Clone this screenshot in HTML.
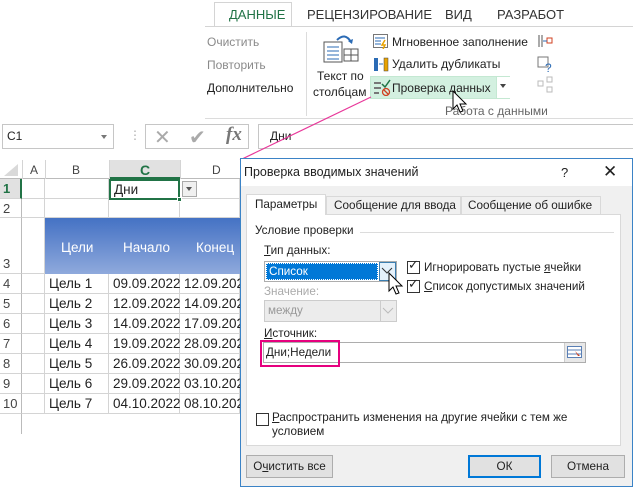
<!DOCTYPE html>
<html><head><meta charset="utf-8"><style>
*{margin:0;padding:0;box-sizing:border-box}
body{width:633px;height:487px;overflow:hidden;background:#fff;position:relative;font-family:"Liberation Sans","DejaVu Sans",sans-serif;font-size:12px;color:#222}
.a{position:absolute;white-space:nowrap}
.g{color:#8a8a8a}
.d{font-size:11.7px}
.cell{position:absolute;border-right:1px solid #d4d4d4;border-bottom:1px solid #d4d4d4;font-size:13.5px;padding-left:4px;line-height:19px}
.rh{position:absolute;left:0;width:22px;border-bottom:1px solid #d4d4d4;border-right:1px solid #bbb;background:#fff;font-size:13px;color:#444;padding-left:3px;line-height:19px}
.u{text-decoration:underline}
.btn{position:absolute;height:23px;border:1px solid #adadad;background:#e1e1e1;text-align:center;line-height:21px;font-size:11.7px}
.cb{position:absolute;width:13px;height:13px;border:1px solid #333;background:#fff}
</style></head><body>
<!-- ribbon tabs -->
<div class="a" style="left:214px;top:2px;width:78px;height:25px;border:1px solid #d4d4d4;border-bottom:none;background:#fff"></div>
<div class="a" style="left:205px;top:26px;width:428px;border-top:1px solid #d4d4d4"></div>
<div class="a" style="left:214px;top:27px;width:78px;height:2px;background:#fff"></div>
<div class="a" style="left:229px;top:7px;color:#217346;font-size:13px">ДАННЫЕ</div>
<div class="a" style="left:307px;top:7px;font-size:13px;color:#333">РЕЦЕНЗИРОВАНИЕ</div>
<div class="a" style="left:445px;top:7px;font-size:13px;color:#333">ВИД</div>
<div class="a" style="left:497px;top:7px;font-size:13px;color:#333">РАЗРАБОТ</div>
<div class="a g" style="left:207px;top:35px">Очистить</div>
<div class="a g" style="left:207px;top:58px">Повторить</div>
<div class="a" style="left:207px;top:81px">Дополнительно</div>
<div class="a" style="left:306px;top:32px;height:84px;border-left:1px solid #dcdcdc"></div>
<svg class="a" style="left:323px;top:32px" width="36" height="32"><rect x="1" y="10" width="18" height="20" fill="#fff" stroke="#555"/><path d="M4 15h12M4 19h12M4 23h12M4 27h12" stroke="#2b6bb5"/><rect x="21" y="17" width="14" height="12" fill="#fff" stroke="#555"/><path d="M21 23h14M28 17v12" stroke="#555"/><path d="M14 8q8-8 14 2" fill="none" stroke="#2b6bb5" stroke-width="2"/><path d="M25 9l4 3 1-5z" fill="#2b6bb5"/></svg>
<div class="a" style="left:317px;top:69px">Текст по</div>
<div class="a" style="left:313px;top:85px">столбцам</div>
<svg class="a" style="left:373px;top:34px" width="16" height="15"><rect x=".5" y=".5" width="14" height="13" fill="#fff" stroke="#777"/><path d="M2 4h10M2 7h6M2 10h6" stroke="#2b6bb5"/><path d="M12 6l-3 5h3l-2 4" stroke="#e8a200" fill="none" stroke-width="1.5"/></svg>
<div class="a" style="left:392px;top:35px">Мгновенное заполнение</div>
<svg class="a" style="left:373px;top:57px" width="16" height="15"><rect x="1" y="1" width="4" height="13" fill="#2b6bb5"/><rect x="11" y="1" width="4" height="13" fill="#e8a200" stroke="#444" stroke-width=".5"/><path d="M6 7h4" stroke="#2b6bb5"/></svg>
<div class="a" style="left:392px;top:57px">Удалить дубликаты</div>
<div class="a" style="left:370px;top:76px;width:140px;height:23px;background:#d3f0e0;border:1px solid #c4e8d2"></div>
<div class="a" style="left:496px;top:77px;width:14px;height:21px;background:#fff;border-left:1px solid #c4e8d2"></div>
<div class="a" style="left:500px;top:84px;border:3px solid transparent;border-top:4px solid #444"></div>
<svg class="a" style="left:373px;top:79px" width="18" height="17"><path d="M1 4h7M1 9h7M1 14h5" stroke="#777" stroke-width="2"/><path d="M9 5l3 3 5-7" stroke="#217346" fill="none" stroke-width="1.5"/><circle cx="13" cy="13" r="3.5" fill="none" stroke="#d04020" stroke-width="1.3"/><path d="M10.5 10.5l5 5" stroke="#d04020" stroke-width="1.3"/></svg>
<div class="a" style="left:392px;top:81px">Проверка данных</div>
<svg class="a" style="left:537px;top:33px" width="16" height="65"><path d="M2 2v12M5 2v12" stroke="#555"/><rect x="10" y="5" width="5" height="5" fill="none" stroke="#d04020"/><path d="M6 8h4" stroke="#2b6bb5"/><rect x="1" y="24" width="10" height="10" fill="none" stroke="#777"/><text x="8" y="39" font-size="12" fill="#2b6bb5" font-family="Liberation Sans">?</text><rect x="1" y="48" width="5" height="5" fill="none" stroke="#bbb"/><rect x="10" y="44" width="5" height="5" fill="none" stroke="#bbb"/><rect x="10" y="54" width="5" height="5" fill="none" stroke="#bbb"/></svg>
<div class="a g" style="left:445px;top:104px;color:#666">Работа с данными</div>
<div class="a" style="left:205px;top:118px;width:428px;border-top:1px solid #dcdcdc"></div>
<!-- formula bar -->
<div class="a" style="left:2px;top:124px;width:112px;height:25px;border:1px solid #c6c6c6"></div>
<div class="a" style="left:7px;top:129px">C1</div>
<div class="a" style="left:101px;top:135px;border:3px solid transparent;border-top:4px solid #777"></div>
<div class="a" style="left:129px;top:128px;color:#aaa">⋮</div>
<div class="a" style="left:145px;top:124px;width:104px;height:25px;border:1px solid #c6c6c6"></div>
<div class="a" style="left:154px;top:125px;font-size:20px;color:#aaa">✕</div>
<div class="a" style="left:189px;top:125px;font-size:20px;color:#aaa">✔</div>
<div class="a" style="left:226px;top:124px;font-family:'Liberation Serif',serif;font-style:italic;font-weight:bold;font-size:19px;color:#777">fx</div>
<div class="a" style="left:258px;top:124px;width:380px;height:25px;border:1px solid #c6c6c6"></div>
<div class="a" style="left:270px;top:129px">Дни</div>
<!-- grid headers -->
<div class="a" style="left:0;top:160px;width:240px;height:19px;background:#fff;border-bottom:1px solid #bbb"></div>
<div class="a" style="left:4px;top:164px;border-left:14px solid transparent;border-bottom:12px solid #d9d9d9"></div>
<div class="a" style="left:109px;top:160px;width:71px;height:19px;background:#e1e1e1;border-bottom:2px solid #217346"></div>
<div class="a" style="left:30px;top:163px;color:#444">A</div>
<div class="a" style="left:72px;top:163px;color:#444">B</div>
<div class="a" style="left:140px;top:162px;color:#217346;font-weight:bold;font-size:14px">C</div>
<div class="a" style="left:212px;top:163px;color:#444">D</div>
<div class="a" style="left:22px;top:160px;height:19px;border-left:1px solid #d4d4d4"></div>
<div class="a" style="left:45px;top:160px;height:19px;border-left:1px solid #d4d4d4"></div>
<div class="a" style="left:109px;top:160px;height:19px;border-left:1px solid #d4d4d4"></div>
<div class="a" style="left:180px;top:160px;height:19px;border-left:1px solid #d4d4d4"></div>
<!-- rows -->
<div class="rh" style="top:179px;height:20px;background:#e1e1e1;color:#217346;font-weight:bold;border-right:2px solid #217346">1</div>
<div class="rh" style="top:199px;height:19px">2</div>
<div class="rh" style="top:218px;height:56px;padding-top:36px">3</div>
<div class="cell" style="left:22px;top:179px;width:23px;height:20px"></div>
<div class="cell" style="left:45px;top:179px;width:64px;height:20px"></div>
<div class="cell" style="left:180px;top:179px;width:60px;height:20px"></div>
<div class="cell" style="left:22px;top:199px;width:23px;height:19px"></div>
<div class="cell" style="left:45px;top:199px;width:64px;height:19px"></div>
<div class="cell" style="left:109px;top:199px;width:71px;height:19px"></div>
<div class="cell" style="left:180px;top:199px;width:60px;height:19px"></div>
<div class="cell" style="left:22px;top:218px;width:23px;height:56px"></div>
<div class="a" style="left:45px;top:218px;width:195px;height:56px;background:linear-gradient(#4472c4,#8fa9dc)"></div>
<div class="a" style="left:61px;top:240px;color:#fff;font-size:13.5px">Цели</div>
<div class="a" style="left:123px;top:240px;color:#fff;font-size:13.5px">Начало</div>
<div class="a" style="left:196px;top:240px;color:#fff;font-size:13.5px">Конец</div>
<div class="a" style="left:109px;top:179px;width:71px;height:21px;border:2px solid #217346;padding-left:3px;font-size:13.5px;line-height:17px">Дни</div>
<div class="a" style="left:177px;top:197px;width:5px;height:5px;background:#217346;border:1px solid #fff"></div>
<div class="a" style="left:182px;top:181px;width:15px;height:16px;border:1px solid #aaa;background:#f0f0f0"></div>
<div class="a" style="left:186px;top:187px;border:3.5px solid transparent;border-top:4px solid #555"></div>
<div class="rh" style="top:274px;height:20px">4</div><div class="cell" style="left:22px;top:274px;width:23px;height:20px"></div><div class="cell" style="left:45px;top:274px;width:64px;height:20px">Цель 1</div><div class="cell" style="left:109px;top:274px;width:71px;height:20px">09.09.2022</div><div class="cell" style="left:180px;top:274px;width:60px;height:20px">12.09.2022</div>
<div class="rh" style="top:294px;height:20px">5</div><div class="cell" style="left:22px;top:294px;width:23px;height:20px"></div><div class="cell" style="left:45px;top:294px;width:64px;height:20px">Цель 2</div><div class="cell" style="left:109px;top:294px;width:71px;height:20px">12.09.2022</div><div class="cell" style="left:180px;top:294px;width:60px;height:20px">14.09.2022</div>
<div class="rh" style="top:314px;height:20px">6</div><div class="cell" style="left:22px;top:314px;width:23px;height:20px"></div><div class="cell" style="left:45px;top:314px;width:64px;height:20px">Цель 3</div><div class="cell" style="left:109px;top:314px;width:71px;height:20px">14.09.2022</div><div class="cell" style="left:180px;top:314px;width:60px;height:20px">17.09.2022</div>
<div class="rh" style="top:334px;height:20px">7</div><div class="cell" style="left:22px;top:334px;width:23px;height:20px"></div><div class="cell" style="left:45px;top:334px;width:64px;height:20px">Цель 4</div><div class="cell" style="left:109px;top:334px;width:71px;height:20px">19.09.2022</div><div class="cell" style="left:180px;top:334px;width:60px;height:20px">28.09.2022</div>
<div class="rh" style="top:354px;height:20px">8</div><div class="cell" style="left:22px;top:354px;width:23px;height:20px"></div><div class="cell" style="left:45px;top:354px;width:64px;height:20px">Цель 5</div><div class="cell" style="left:109px;top:354px;width:71px;height:20px">26.09.2022</div><div class="cell" style="left:180px;top:354px;width:60px;height:20px">30.09.2022</div>
<div class="rh" style="top:374px;height:20px">9</div><div class="cell" style="left:22px;top:374px;width:23px;height:20px"></div><div class="cell" style="left:45px;top:374px;width:64px;height:20px">Цель 6</div><div class="cell" style="left:109px;top:374px;width:71px;height:20px">29.09.2022</div><div class="cell" style="left:180px;top:374px;width:60px;height:20px">03.10.2022</div>
<div class="rh" style="top:394px;height:20px">10</div><div class="cell" style="left:22px;top:394px;width:23px;height:20px"></div><div class="cell" style="left:45px;top:394px;width:64px;height:20px">Цель 7</div><div class="cell" style="left:109px;top:394px;width:71px;height:20px">04.10.2022</div><div class="cell" style="left:180px;top:394px;width:60px;height:20px">08.10.2022</div>
<div class="a" style="left:0;top:414px;width:22px;height:20px;border-right:1px solid #bbb"></div>
<!-- pink line -->
<svg class="a" style="left:0;top:0" width="633" height="487"><line x1="371" y1="97" x2="240" y2="160" stroke="#e8389a" stroke-width="1.2"/></svg>
<!-- dialog -->
<div class="d">
<div class="a" style="left:240px;top:158px;width:393px;height:329px;background:#f0f0f0;border:1px solid #3b83c6"></div>
<div class="a" style="left:241px;top:159px;width:391px;height:27px;background:#fff"></div>
<div class="a" style="left:244px;top:165px;font-size:12.5px">Проверка вводимых значений</div>
<div class="a" style="left:561px;top:165px;font-size:13px">?</div>
<div class="a" style="left:603px;top:162px;font-size:17px">✕</div>
<div class="a" style="left:246px;top:214px;width:375px;height:232px;background:#fff;border:1px solid #d9d9d9"></div>
<div class="a" style="left:246px;top:194px;width:80px;height:21px;background:#fff;border:1px solid #d9d9d9;border-bottom:none"></div>
<div class="a" style="left:326px;top:196px;width:135px;height:18px;border:1px solid #d9d9d9;border-bottom:none"></div>
<div class="a" style="left:461px;top:196px;width:140px;height:18px;border:1px solid #d9d9d9;border-bottom:none"></div>
<div class="a" style="left:255px;top:198px">Параметры</div>
<div class="a" style="left:334px;top:199px">Сообщение для ввода</div>
<div class="a" style="left:468px;top:199px">Сообщение об ошибке</div>
<div class="a" style="left:255px;top:224px">Условие проверки</div>
<div class="a" style="left:360px;top:232px;width:254px;border-top:1px solid #dcdcdc"></div>
<div class="a" style="left:264px;top:244px"><span class="u">Т</span>ип данных:</div>
<div class="a" style="left:264px;top:261px;width:133px;height:21px;border:1px solid #adadad;background:#fff"></div>
<div class="a" style="left:266px;top:263px;width:112px;height:17px;background:#0078d7;color:#fff;padding-left:2px;line-height:16px;border:1px dotted #fff">Список</div>
<div class="a" style="left:379px;top:262px;width:17px;height:19px;background:#e5f1fb;border:1px solid #3c7fb1"></div>
<svg class="a" style="left:381px;top:267px" width="12" height="8"><path d="M1 1l5 5 5-5" fill="none" stroke="#333"/></svg>
<div class="a g" style="left:264px;top:285px;color:#aaa">Значение:</div>
<div class="a" style="left:264px;top:300px;width:133px;height:22px;border:1px solid #ccc;background:#ececec"></div>
<div class="a" style="left:268px;top:304px;color:#999">между</div>
<div class="a" style="left:380px;top:301px;width:16px;height:20px;border-left:1px solid #ccc"></div>
<svg class="a" style="left:382px;top:307px" width="12" height="8"><path d="M1 1l5 5 5-5" fill="none" stroke="#bbb"/></svg>
<div class="a" style="left:264px;top:327px"><span class="u">И</span>сточник:</div>
<div class="a" style="left:263px;top:342px;width:323px;height:21px;border:1px solid #adadad;background:#fff"></div>
<div class="a" style="left:564px;top:343px;width:21px;height:19px;background:#e8e8e8;border-left:1px solid #ccc"></div>
<svg class="a" style="left:567px;top:346px" width="16" height="13"><rect x=".5" y=".5" width="14" height="11" fill="#fff" stroke="#5a7fb5"/><path d="M1 4h13M1 8h13" stroke="#5a7fb5"/><path d="M8 5l5 5-2 0z" fill="#d04020"/></svg>
<div class="a" style="left:260px;top:340px;width:80px;height:27px;border:2px solid #e6007e"></div>
<div class="a" style="left:266px;top:346px">Дни;Недели</div>
<div class="cb" style="left:407px;top:261px"></div><div class="a" style="left:408px;top:257px;font-size:13px">✓</div>
<div class="a" style="left:424px;top:261px">Игнорировать пустые <span class="u">я</span>чейки</div>
<div class="cb" style="left:407px;top:280px"></div><div class="a" style="left:408px;top:276px;font-size:13px">✓</div>
<div class="a" style="left:424px;top:280px"><span class="u">С</span>писок допустимых значений</div>
<svg class="a" style="left:388px;top:272px" width="16" height="24"><path d="M1 1v18l4-4 3 7 3-1-3-7h6z" fill="#fff" stroke="#000"/></svg>
<div class="cb" style="left:256px;top:413px"></div>
<div class="a" style="left:272px;top:411px"><span class="u">Р</span>аспространить изменения на другие ячейки с тем же</div>
<div class="a" style="left:272px;top:425px">условием</div>
<div class="btn" style="left:246px;top:455px;width:87px">О<span class="u">ч</span>истить все</div>
<div class="btn" style="left:468px;top:455px;width:73px;border:2px solid #0078d7;line-height:19px">ОК</div>
<div class="btn" style="left:551px;top:455px;width:74px">Отмена</div>
</div>
<svg class="a" style="left:452px;top:90px" width="16" height="24"><path d="M1 1v18l4-4 3 7 3-1-3-7h6z" fill="#fff" stroke="#000"/></svg>
</body></html>
